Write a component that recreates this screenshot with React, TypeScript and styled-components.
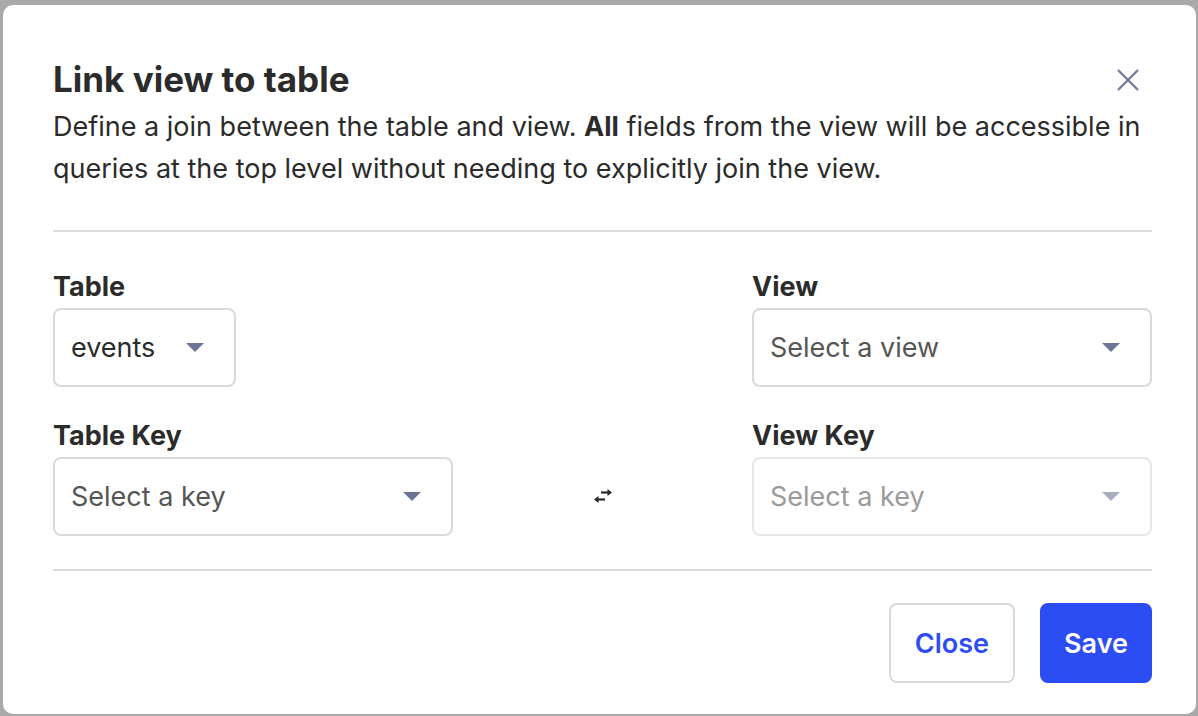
import React from "react";
import styled, { createGlobalStyle } from "styled-components";

const Global = createGlobalStyle`
  html, body { margin: 0; padding: 0; }
  body {
    background: #a9a9a9;
    font-family: Inter, "Noto Sans", sans-serif;
    width: 1198px;
    height: 716px;
    overflow: hidden;
  }
`;

const Backdrop = styled.div`
  width: 1198px;
  height: 716px;
  box-sizing: border-box;
  padding: 5px 2px 2px 3px;
  background: #a9a9a9;
`;

const Modal = styled.div`
  height: 100%;
  box-sizing: border-box;
  background: #ffffff;
  border-radius: 10px;
  padding: 54px 46px 0 50px;
  display: flex;
  flex-direction: column;
  color: #2b2b2b;
`;

const Header = styled.div`
  display: flex;
  align-items: flex-start;
  justify-content: space-between;
`;

const Title = styled.h1`
  margin: 0;
  font-size: 35px;
  line-height: 40px;
  font-weight: 700;
  color: #2b2b2b;
`;

const CloseX = styled.button`
  border: none;
  background: none;
  padding: 0;
  margin: 9px 10px 0 0;
  width: 24px;
  height: 24px;
  display: flex;
  cursor: pointer;
`;

const Description = styled.p`
  margin: 7px 0 0;
  font-size: 27px;
  line-height: 42px;
  color: #2b2b2b;
  width: 1099px;
`;

const Strong = styled.strong`
  font-weight: 700;
`;

const Divider = styled.hr<{ $top: number }>`
  border: none;
  border-top: 2px solid #dcdcdc;
  margin: ${(p) => p.$top}px 0 0;
  width: 1099px;
`;

const Grid = styled.div`
  display: grid;
  grid-template-columns: 400px 1fr 400px;
  row-gap: 33px;
  margin-top: 39px;
  width: 1099px;
`;

const Field = styled.div`
  display: flex;
  flex-direction: column;
  align-items: flex-start;
`;

const Label = styled.label`
  font-size: 27px;
  line-height: 32px;
  font-weight: 700;
  color: #2b2b2b;
  margin-bottom: 5px;
`;

const Select = styled.div<{ $full?: boolean; $disabled?: boolean; $muted?: boolean }>`
  box-sizing: border-box;
  height: 79px;
  width: ${(p) => (p.$full ? "100%" : "auto")};
  border: 2px solid ${(p) => (p.$disabled ? "#e8e8e8" : "#dadada")};
  border-radius: 8px;
  display: flex;
  align-items: center;
  justify-content: space-between;
  gap: 31px;
  padding: 0 30px 0 16px;
  font-size: 27px;
  color: ${(p) => (p.$disabled ? "#9a9a9a" : p.$muted ? "#555555" : "#2b2b2b")};
`;

const Caret = styled.span<{ $disabled?: boolean }>`
  width: 0;
  height: 0;
  border-left: 9px solid transparent;
  border-right: 9px solid transparent;
  border-top: 9px solid ${(p) => (p.$disabled ? "#a9adc2" : "#6e7495")};
`;

const SwapCell = styled.div`
  display: flex;
  align-items: flex-end;
  justify-content: center;
  padding-bottom: 32px;
`;

const Footer = styled.div`
  display: flex;
  justify-content: flex-end;
  gap: 25px;
  margin-top: 32px;
  width: 1099px;
`;

const Button = styled.button<{ $primary?: boolean }>`
  height: 80px;
  box-sizing: border-box;
  border-radius: 8px;
  font-family: inherit;
  font-size: 27px;
  font-weight: 600;
  padding: 0 ${(p) => (p.$primary ? 22 : 24)}px;
  cursor: pointer;
  border: 2px solid ${(p) => (p.$primary ? "#2c4cf4" : "#dadada")};
  background: ${(p) => (p.$primary ? "#2c4cf4" : "#ffffff")};
  color: ${(p) => (p.$primary ? "#ffffff" : "#2c4cf4")};
`;

const SwapIcon = () => (
  <svg width="22" height="16" viewBox="0 0 22 16">
    <path d="M9 4.5 H17" stroke="#2b2b2b" strokeWidth="2.2" />
    <path d="M15.5 1 L20 4.5 L15.5 8 Z" fill="#2b2b2b" />
    <path d="M5 11.5 H13" stroke="#2b2b2b" strokeWidth="2.2" />
    <path d="M6.5 8 L2 11.5 L6.5 15 Z" fill="#2b2b2b" />
  </svg>
);

export default function App() {
  return (
    <>
      <Global />
      <Backdrop>
        <Modal>
          <Header>
            <Title>Link view to table</Title>
            <CloseX aria-label="Close">
              <svg width="24" height="24" viewBox="0 0 24 24">
                <path d="M2 2 L22 22 M22 2 L2 22" stroke="#6e7899" strokeWidth="2.2" />
              </svg>
            </CloseX>
          </Header>
          <Description>
            Define a join between the table and view. <Strong>All</Strong> fields from the view will be
            accessible in queries at the top level without needing to explicitly join the view.
          </Description>
          <Divider $top={40} />
          <Grid>
            <Field>
              <Label>Table</Label>
              <Select>
                events
                <Caret />
              </Select>
            </Field>
            <div />
            <Field>
              <Label>View</Label>
              <Select $full $muted>
                Select a view
                <Caret />
              </Select>
            </Field>
            <Field>
              <Label>Table Key</Label>
              <Select $full $muted>
                Select a key
                <Caret />
              </Select>
            </Field>
            <SwapCell>
              <SwapIcon />
            </SwapCell>
            <Field>
              <Label>View Key</Label>
              <Select $full $disabled>
                Select a key
                <Caret $disabled />
              </Select>
            </Field>
          </Grid>
          <Divider $top={33} />
          <Footer>
            <Button>Close</Button>
            <Button $primary>Save</Button>
          </Footer>
        </Modal>
      </Backdrop>
    </>
  );
}
